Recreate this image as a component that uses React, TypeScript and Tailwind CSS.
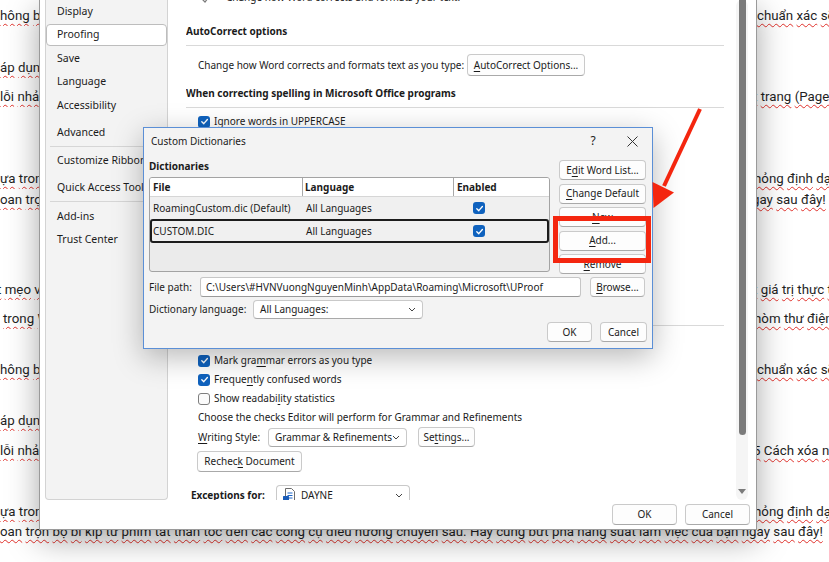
import React from "react";

const UI = "font-['Noto_Sans',sans-serif]";

function Sq({ t }: { t: string }) {
  const ws = t.split(" ");
  return (
    <span>
      {ws.map((w, i) => (
        <React.Fragment key={i}>
          {i > 0 ? " " : null}
          <span className="underline decoration-wavy decoration-[#e0312b] decoration-[1px] underline-offset-[3px]">{w}</span>
        </React.Fragment>
      ))}
    </span>
  );
}

function M({ c }: { c: string }) {
  return <span className="underline underline-offset-[2px]">{c}</span>;
}

function Check({ on }: { on: boolean }) {
  return on ? (
    <span className="flex h-[12px] w-[12px] shrink-0 items-center justify-center rounded-[3px] bg-[#0f62be]">
      <svg width="9" height="9" viewBox="0 0 10 10">
        <path d="M2 5.3 L4.2 7.4 L8.2 2.8" stroke="white" strokeWidth="1.5" fill="none" strokeLinecap="round" strokeLinejoin="round" />
      </svg>
    </span>
  ) : (
    <span className="h-[12px] w-[12px] shrink-0 rounded-[3px] border border-[#7e7e7e] bg-[#fbfbfb]" />
  );
}

function Btn({ children, className }: { children: React.ReactNode; className: string }) {
  return (
    <div className={"flex shrink-0 items-center justify-center whitespace-nowrap rounded-[4px] border border-[#cacaca] border-b-[#a9a9a9] bg-[#fdfdfd] text-[#1b1b1b] " + className}>
      {children}
    </div>
  );
}

function Chevron() {
  return (
    <svg width="8" height="5" viewBox="0 0 8 5" className="shrink-0">
      <path d="M1 1 L4 4 L7 1" stroke="#444" strokeWidth="1" fill="none" />
    </svg>
  );
}

function Select({ children, className }: { children: React.ReactNode; className: string }) {
  return (
    <div className={"flex shrink-0 items-center justify-between whitespace-nowrap rounded-[4px] border border-[#c9c9c9] border-b-[#a9a9a9] bg-white pl-[6px] pr-[6px] text-[#1b1b1b] " + className}>
      <div className="flex items-center gap-[6px]">{children}</div>
      <Chevron />
    </div>
  );
}

const docLines = [
  { mt: "mt-[6px]", left: "hông bảo", lo: "", right: "chuẩn xác sẽ giúp", ro: "" },
  { mt: "mt-[32px]", left: "áp dụng", lo: "", right: "", ro: "" },
  { mt: "mt-[9px]", left: "lỗi nhảy", lo: "", right: "t trang (Page", ro: "-ml-[4px]" },
  { mt: "mt-[62px]", left: "ựa trong", lo: "", right: "hỏng định dạng", ro: "-ml-[3px]" },
  { mt: "mt-[1px]", left: "oan trọn", lo: "", right: "gay sau đây!", ro: "-ml-[5px]" },
  { mt: "mt-[70px]", left: "t mẹo vặt", lo: "-ml-[3px]", right: "t giá trị thực tế", ro: "-ml-[4px]" },
  { mt: "mt-[9px]", left: "trong Word", lo: "ml-[3px]", right: "hòm thư điện tử", ro: "-ml-[3px]" },
  { mt: "mt-[31px]", left: "hông bảo", lo: "", right: "chuẩn xác sẽ giúp", ro: "" },
  { mt: "mt-[31px]", left: "áp dụng", lo: "", right: "", ro: "" },
  { mt: "mt-[10px]", left: "lỗi nhảy", lo: "", right: "5 Cách xóa nhanh", ro: "-ml-[4px]" },
  { mt: "mt-[41px]", left: "ựa trong", lo: "", right: "hỏng định dạng", ro: "-ml-[3px]" },
];

function Document() {
  return (
    <div className="flex w-[829px] flex-col font-['Roboto',sans-serif] text-[13.3px] text-[#1f1f1f]">
      {docLines.map((l, i) => (
        <div key={i} className={"flex h-[20px] items-center whitespace-nowrap " + l.mt}>
          <div className="w-[757px] shrink-0 overflow-hidden">
            <div className={l.lo}>
              <Sq t={l.left} />
            </div>
          </div>
          {l.right ? (
            <div className={"shrink-0 " + l.ro}>
              <Sq t={l.right} />
            </div>
          ) : null}
        </div>
      ))}
      <div className="flex h-[20px] items-center whitespace-nowrap">
        <Sq t="oan trọn bộ bí kíp từ phím tắt thần tốc đến các công cụ điều hướng chuyên sâu. Hãy cùng bứt phá năng suất làm việc của bạn ngay sau đây!" />
      </div>
    </div>
  );
}

function SideItem({ label, cls }: { label: string; cls: string }) {
  return <div className={"flex h-[23px] shrink-0 items-center whitespace-nowrap pl-[11px] " + cls}>{label}</div>;
}

function Sidebar() {
  return (
    <div className="ml-[5px] flex h-[500px] w-[123px] shrink-0 flex-col overflow-hidden rounded-b-[4px] border-x border-b border-[#d3d3d3] bg-[#f3f3f3] text-[10.5px] text-[#1b1b1b]">
      <SideItem label="Display" cls="" />
      <div className="mt-[1px] flex h-[22px] shrink-0 items-center rounded-[4px] border border-[#bdbdbd] bg-white pl-[10px]">Proofing</div>
      <SideItem label="Save" cls="mt-[1px]" />
      <SideItem label="Language" cls="" />
      <SideItem label="Accessibility" cls="mt-[1px]" />
      <SideItem label="Advanced" cls="mt-[4px]" />
      <div className="ml-[4px] mt-[2px] h-px shrink-0 bg-[#d6d6d6]" />
      <SideItem label="Customize Ribbon" cls="mt-[2px]" />
      <SideItem label="Quick Access Toolbar" cls="mt-[4px]" />
      <div className="ml-[4px] mt-[2px] h-px shrink-0 bg-[#d6d6d6]" />
      <SideItem label="Add-ins" cls="mt-[3px]" />
      <SideItem label="Trust Center" cls="" />
    </div>
  );
}

function CheckRow({ on, children, cls }: { on: boolean; children: React.ReactNode; cls: string }) {
  return (
    <div className={"flex h-[19px] shrink-0 items-center gap-[4px] whitespace-nowrap pl-[12px] " + cls}>
      <Check on={on} />
      <span>{children}</span>
    </div>
  );
}

function Content() {
  return (
    <div className="ml-[18px] flex h-[500px] w-[538px] shrink-0 flex-col overflow-hidden text-[#1b1b1b]">
      <div className="-mt-[12px] flex h-[19px] shrink-0 items-center whitespace-nowrap pl-[12px]">
        <svg width="16" height="14" viewBox="0 0 16 14" className="shrink-0">
          <path d="M2 6 L7 11 L14 2" stroke="#7a7a7a" strokeWidth="1.2" fill="none" />
        </svg>
        <span className="ml-[12px]">Change how Word corrects and formats your text.</span>
      </div>
      <div className="mt-[15px] flex h-[19px] shrink-0 items-center font-bold">AutoCorrect options</div>
      <div className="mt-[4px] h-px shrink-0 bg-[#d9d9d9]" />
      <div className="mt-[8px] flex h-[22px] shrink-0 items-center whitespace-nowrap pl-[12px]">
        <span className="w-[269px] shrink-0">Change how Word corrects and formats text as you type:</span>
        <Btn className="h-[22px] w-[118px]">
          <span>
            <M c="A" />
            utoCorrect Options...
          </span>
        </Btn>
      </div>
      <div className="mt-[8px] flex h-[19px] shrink-0 items-center font-bold">When correcting spelling in Microsoft Office programs</div>
      <div className="mt-[4px] h-px shrink-0 bg-[#d9d9d9]" />
      <CheckRow on={true} cls="mt-[4px]">
        Ignore words in <M c="U" />PPERCASE
      </CheckRow>
      <div className="flex h-[194px] shrink-0 flex-col">
        <CheckRow on={true} cls="">Ignore words that contain num<M c="b" />ers</CheckRow>
        <CheckRow on={true} cls="">Ignore Internet and <M c="f" />ile addresses</CheckRow>
        <CheckRow on={true} cls="">Flag <M c="r" />epeated words</CheckRow>
        <CheckRow on={false} cls="">Enforce accented uppercase in French</CheckRow>
        <CheckRow on={false} cls="">Suggest from main dictionary only</CheckRow>
        <div className="mt-[4px] flex pl-[12px]">
          <Btn className="h-[21px] w-[118px]">Custom Dictionaries...</Btn>
        </div>
        <div className="mt-[8px] flex h-[19px] items-center pl-[12px]">French modes:</div>
        <div className="mt-[4px] flex h-[19px] items-center pl-[12px]">Spanish modes:</div>
      </div>
      <div className="h-px shrink-0 bg-[#d9d9d9]" />
      <div className="mt-[5px] flex h-[19px] shrink-0 items-center font-bold">When correcting spelling and grammar in Word</div>
      <CheckRow on={true} cls="mt-[1px]">
        Mark gra<M c="m" />mar errors as you type
      </CheckRow>
      <CheckRow on={true} cls="">
        Freque<M c="n" />tly confused words
      </CheckRow>
      <CheckRow on={false} cls="">
        Show readabi<M c="l" />ity statistics
      </CheckRow>
      <div className="flex h-[19px] shrink-0 items-center whitespace-nowrap pl-[12px]">Choose the checks Editor will perform for Grammar and Refinements</div>
      <div className="flex h-[20px] shrink-0 items-center whitespace-nowrap pl-[12px]">
        <span className="w-[70px] shrink-0">
          <M c="W" />
          riting Style:
        </span>
        <Select className="h-[19px] w-[139px]">Grammar &amp; Refinements</Select>
        <Btn className="ml-[11px] h-[20px] w-[57px]">
          <span>
            Se<M c="t" />tings...
          </span>
        </Btn>
      </div>
      <div className="mt-[4px] flex shrink-0 pl-[11px]">
        <Btn className="h-[21px] w-[105px]">
          <span>
            Rechec<M c="k" /> Document
          </span>
        </Btn>
      </div>
      <div className="mt-[13px] flex h-[20px] shrink-0 items-center whitespace-nowrap pl-[5px]">
        <span className="w-[85px] shrink-0 font-bold">
          E<M c="x" />ceptions for:
        </span>
        <Select className="h-[20px] w-[134px]">
          <svg width="12" height="15" viewBox="0 0 12 15">
            <path d="M2.5 0.5 H8.5 L11.5 3.5 V14.5 H2.5 Z" fill="#fff" stroke="#6d6d6d" strokeWidth="1" />
            <path d="M4.5 5 H9.5 M4.5 7.5 H9.5 M4.5 10 H9.5" stroke="#1e66c8" strokeWidth="1" />
            <rect x="0" y="8" width="6" height="6" rx="0.5" fill="#1a5cb8" />
          </svg>
          <span>DAYNE</span>
        </Select>
      </div>
    </div>
  );
}

function Scrollbar() {
  return (
    <div className="ml-[12px] flex h-[500px] w-[12px] shrink-0 flex-col items-center rounded-[6px] bg-[#f5f5f5]">
      <div className="h-[435px] w-[7px] rounded-b-[4px] bg-[#7b7b7b]" />
      <div className="mb-[5px] mt-auto">
        <svg width="8" height="6" viewBox="0 0 8 6">
          <path d="M0 0 H8 L4 5 Z" fill="#7b7b7b" />
        </svg>
      </div>
    </div>
  );
}

function OptionsWindow() {
  return (
    <div className={"absolute left-[39px] top-0 flex h-[530px] w-[718px] flex-col border-x border-b border-[#9a9a9a] bg-white text-[10px] shadow-[0_10px_30px_rgba(0,0,0,0.35)] " + UI}>
      <div className="flex h-[500px] shrink-0">
        <Sidebar />
        <Content />
        <Scrollbar />
      </div>
      <div className="flex flex-1 items-start justify-end gap-[8px] pr-[6px] pt-[4px]">
        <Btn className="h-[21px] w-[65px]">OK</Btn>
        <Btn className="h-[21px] w-[65px]">Cancel</Btn>
      </div>
    </div>
  );
}

function DictDialog() {
  return (
    <div className={"absolute left-[143px] top-[127px] flex h-[222px] w-[510px] flex-col border border-[#5b8fd6] bg-[#f3f3f3] text-[10px] text-[#1b1b1b] shadow-[0_8px_28px_rgba(0,0,0,0.28)] " + UI}>
      <div className="flex h-[26px] shrink-0 items-center pl-[7px]">
        <span>Custom Dictionaries</span>
        <span className="ml-auto w-[20px] text-center text-[12px]">?</span>
        <span className="ml-[14px] flex w-[30px] justify-center">
          <svg width="11" height="11" viewBox="0 0 11 11">
            <path d="M0.5 0.5 L10.5 10.5 M10.5 0.5 L0.5 10.5" stroke="#333" strokeWidth="1" />
          </svg>
        </span>
        <span className="w-[5px]" />
      </div>
      <div className="flex flex-1 flex-col pl-[5px] pr-[5px]">
        <div className="flex h-[118px] shrink-0">
          <div className="flex w-[401px] shrink-0 flex-col">
            <div className="mt-[3px] flex h-[19px] items-center font-bold">Dictionaries</div>
            <div className="mt-[1px] flex h-[95px] flex-col overflow-hidden rounded-[3px] border border-[#a3a3a3] bg-[#ebebeb]">
              <div className="flex h-[19px] shrink-0 border-b border-[#d6d6d6] bg-white font-bold">
                <div className="flex w-[153px] items-center border-r border-[#a8a8a8] pl-[3px]">File</div>
                <div className="flex w-[151px] items-center border-r border-[#a8a8a8] pl-[2px]">Language</div>
                <div className="flex flex-1 items-center pl-[3px]">Enabled</div>
              </div>
              <div className="flex h-[22px] shrink-0 items-center whitespace-nowrap bg-[#f0f0f0]">
                <div className="w-[153px] pl-[3px]">RoamingCustom.dic (Default)</div>
                <div className="w-[151px] pl-[3px]">All Languages</div>
                <div className="flex flex-1 pl-[19px]">
                  <Check on={true} />
                </div>
              </div>
              <div className="flex h-[24px] shrink-0 items-center whitespace-nowrap rounded-[3px] border-2 border-[#1c1c1c] bg-[#f0f0f0]">
                <div className="w-[151px] pl-[1px]">CUSTOM.DIC</div>
                <div className="w-[151px] pl-[3px]">All Languages</div>
                <div className="flex flex-1 pl-[19px]">
                  <Check on={true} />
                </div>
              </div>
            </div>
          </div>
          <div className="ml-[9px] flex w-[87px] shrink-0 flex-col gap-[3.5px] pt-[6px]">
            <Btn className="h-[20px] w-[87px]">
              <span>
                E<M c="d" />it Word List...
              </span>
            </Btn>
            <Btn className="h-[20px] w-[87px]">
              <span>
                <M c="C" />hange Default
              </span>
            </Btn>
            <Btn className="h-[20px] w-[87px]">
              <span>
                <M c="N" />ew
              </span>
            </Btn>
            <Btn className="h-[20px] w-[87px]">
              <span>
                <M c="A" />dd...
              </span>
            </Btn>
            <Btn className="h-[20px] w-[87px]">
              <span>
                <M c="R" />emove
              </span>
            </Btn>
          </div>
        </div>
        <div className="mt-[5px] flex h-[20px] shrink-0 items-center whitespace-nowrap">
          <span className="w-[51px] shrink-0">File path:</span>
          <div className="flex h-[20px] w-[381px] shrink-0 items-center overflow-hidden rounded-[3px] border border-[#c6c6c6] border-b-[#9a9a9a] bg-white pl-[5px]">
            C:\Users\#HVNVuongNguyenMinh\AppData\Roaming\Microsoft\UProof
          </div>
          <Btn className="ml-[9px] h-[20px] w-[55px]">
            <span>
              <M c="B" />rowse...
            </span>
          </Btn>
        </div>
        <div className="mt-[3px] flex h-[19px] shrink-0 items-center whitespace-nowrap">
          <span className="w-[104px] shrink-0">Dictionary language:</span>
          <Select className="h-[19px] w-[170px]">All Languages:</Select>
        </div>
        <div className="mt-[3px] flex h-[20px] shrink-0 justify-end gap-[8px]">
          <Btn className="h-[20px] w-[45px]">OK</Btn>
          <Btn className="h-[20px] w-[47px]">Cancel</Btn>
        </div>
      </div>
    </div>
  );
}

export default function App() {
  return (
    <div className="relative h-[562px] w-[829px] overflow-hidden bg-white">
      <Document />
      <OptionsWindow />
      <DictDialog />
      <div className="absolute left-[553px] top-[216px] h-[47px] w-[98px] border-[5px] border-[#f4260f]" />
      <svg className="pointer-events-none absolute left-0 top-0" width="829" height="562" viewBox="0 0 829 562">
        <line x1="700" y1="109" x2="664" y2="186" stroke="#f4260f" strokeWidth="4" />
        <polygon points="652.5,182 674,192.5 653.5,208" fill="#f4260f" />
      </svg>
    </div>
  );
}
